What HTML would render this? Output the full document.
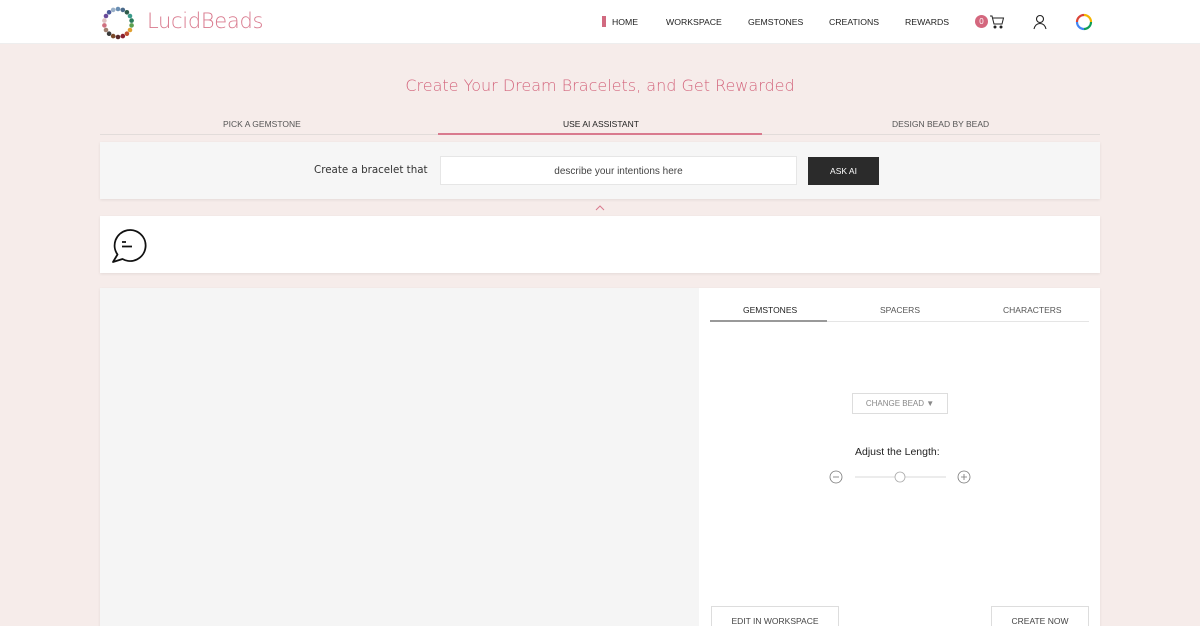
<!DOCTYPE html>
<html><head><meta charset="utf-8"><style>
*{margin:0;padding:0;box-sizing:border-box}
html,body{width:1200px;height:626px;overflow:hidden}
body{background:#f6ecea;font-family:"Liberation Sans",sans-serif;position:relative;color:#222}
.a{position:absolute}
.hdr{left:0;top:0;width:1200px;height:44px;background:#fff;border-bottom:1px solid #eee}
.nav{top:17px;font-size:8.7px;color:#222}
.tab{font-size:8.5px;color:#555;top:119px}
.box{background:#fff;box-shadow:0 1px 3px rgba(0,0,0,.08)}
.btn{border:1px solid #ddd;background:#fff;font-size:8.5px;color:#444;text-align:center}
</style></head><body>
<div class="a hdr"></div>
<svg class="a" style="left:100px;top:5px" width="36" height="36" viewBox="0 0 36 36">
<g>
<circle cx="18" cy="4" r="2.3" fill="#6a8fb3"/><circle cx="22.8" cy="4.9" r="2.3" fill="#4a6a8a"/><circle cx="26.9" cy="7.3" r="2.3" fill="#2e5a4a"/><circle cx="30" cy="11" r="2.3" fill="#3a9a8a"/><circle cx="31.6" cy="15.6" r="2.3" fill="#2a7a5a"/><circle cx="31.6" cy="20.4" r="2.3" fill="#5aa050"/><circle cx="30" cy="25" r="2.3" fill="#e0a030"/><circle cx="26.9" cy="28.7" r="2.3" fill="#c05030"/><circle cx="22.8" cy="31.1" r="2.3" fill="#8a2030"/><circle cx="18" cy="32" r="2.3" fill="#5a2a2a"/><circle cx="13.2" cy="31.1" r="2.3" fill="#7a4a2a"/><circle cx="9.1" cy="28.7" r="2.3" fill="#3a3a3a"/><circle cx="6" cy="25" r="2.3" fill="#a08070"/><circle cx="4.4" cy="20.4" r="2.3" fill="#d07080"/><circle cx="4.4" cy="15.6" r="2.3" fill="#e0c0c0"/><circle cx="6" cy="11" r="2.3" fill="#6a4a9a"/><circle cx="9.1" cy="7.3" r="2.3" fill="#4a5a9a"/><circle cx="13.2" cy="4.9" r="2.3" fill="#9ab0c8"/>
</g></svg>
<div class="a" style="left:147px;top:9px;font-size:21px;color:#d97a8e;font-family:'DejaVu Sans',sans-serif;font-weight:300;letter-spacing:-.3px">LucidBeads</div>
<div class="a" style="left:602px;top:16px;width:4px;height:11px;background:#d16a80"></div>
<div class="a nav" style="left:612px">HOME</div>
<div class="a nav" style="left:666px">WORKSPACE</div>
<div class="a nav" style="left:748px">GEMSTONES</div>
<div class="a nav" style="left:829px">CREATIONS</div>
<div class="a nav" style="left:905px">REWARDS</div>
<div class="a" style="left:975px;top:15px;width:13px;height:13px;border-radius:50%;background:#d4677e;color:#fff;font-size:8px;text-align:center;line-height:13px">0</div>
<svg class="a" style="left:989px;top:14px" width="16" height="16" viewBox="0 0 16 16" fill="none" stroke="#222" stroke-width="1"><path d="M1 2h2l2 8h8l1.5-6H4"/><circle cx="6" cy="13" r="1" fill="#222"/><circle cx="12" cy="13" r="1" fill="#222"/></svg>
<svg class="a" style="left:1032px;top:14px" width="16" height="16" viewBox="0 0 16 16" fill="none" stroke="#222" stroke-width="1.1"><circle cx="8" cy="5" r="3.5"/><path d="M2 15c1-4 3.5-5.5 6-5.5s5 1.5 6 5.5"/></svg>
<svg class="a" style="left:1075px;top:13px" width="18" height="18" viewBox="0 0 18 18" fill="none" stroke-width="2.2"><path d="M9 2a7 7 0 0 1 7 7" stroke="#f4b400"/><path d="M16 9a7 7 0 0 1-7 7" stroke="#0f9d58"/><path d="M9 16a7 7 0 0 1-7-7" stroke="#4285f4"/><path d="M2 9a7 7 0 0 1 7-7" stroke="#db4437"/></svg>

<div class="a" style="left:0;top:76px;width:1200px;text-align:center;font-size:16px;color:#d4677e;font-family:'DejaVu Sans',sans-serif;font-weight:300">Create Your Dream Bracelets, and Get Rewarded</div>
<div class="a" style="left:100px;top:134px;width:1000px;height:1px;background:#e2dcda"></div>
<div class="a" style="left:438px;top:133px;width:324px;height:2px;background:#d97a8e"></div>
<div class="a tab" style="left:223px">PICK A GEMSTONE</div>
<div class="a tab" style="left:563px;color:#222">USE AI ASSISTANT</div>
<div class="a tab" style="left:892px">DESIGN BEAD BY BEAD</div>

<div class="a box" style="left:100px;top:142px;width:1000px;height:57px;background:#f6f6f6"></div>
<div class="a" style="left:314px;top:164px;font-size:10.3px;color:#333;font-family:'DejaVu Sans',sans-serif">Create a bracelet that</div>
<div class="a" style="left:440px;top:156px;width:357px;height:29px;background:#fff;border:1px solid #e6e6e6;font-size:10px;color:#444;text-align:center;line-height:29px">describe your intentions here</div>
<div class="a" style="left:808px;top:157px;width:71px;height:28px;background:#2b2b2b;color:#fff;font-size:8.5px;text-align:center;line-height:28px">ASK AI</div>
<svg class="a" style="left:595px;top:205px" width="10" height="6" viewBox="0 0 10 6" fill="none" stroke="#d97a8e"><path d="M1 5l4-4 4 4"/></svg>

<div class="a box" style="left:100px;top:216px;width:1000px;height:57px"></div>
<svg class="a" style="left:110px;top:227px" width="38" height="38" viewBox="0 0 38 38" fill="none" stroke="#111" stroke-width="1.8" stroke-linejoin="round"><path d="M3 35L7.5 27.5A15.5 15.5 0 1 1 12.5 32Z"/><path d="M12 15h4M12 19.5h10"/></svg>

<div class="a box" style="left:100px;top:288px;width:1000px;height:340px"></div>
<div class="a" style="left:100px;top:288px;width:599px;height:340px;background:#f5f5f5"></div>
<div class="a" style="left:710px;top:321px;width:379px;height:1px;background:#e5e5e5"></div>
<div class="a" style="left:710px;top:320px;width:117px;height:2px;background:#999"></div>
<div class="a tab" style="left:743px;top:305px;color:#222">GEMSTONES</div>
<div class="a tab" style="left:880px;top:305px">SPACERS</div>
<div class="a tab" style="left:1003px;top:305px">CHARACTERS</div>
<div class="a btn" style="left:852px;top:393px;width:96px;height:21px;line-height:20px;color:#888;font-size:8px">CHANGE BEAD &#9660;</div>
<div class="a" style="top:446px;left:855px;font-size:10.5px;color:#222">Adjust the Length:</div>
<svg class="a" style="left:828px;top:469px" width="150" height="16" viewBox="0 0 150 16" fill="none" stroke="#777" stroke-width=".8"><circle cx="8" cy="8" r="6"/><path d="M5 8h6"/><path d="M27 8h91" stroke="#ccc"/><circle cx="72" cy="8" r="5" fill="#fff" stroke="#aaa"/><circle cx="136" cy="8" r="6"/><path d="M133 8h6M136 5v6"/></svg>
<div class="a btn" style="left:711px;top:606px;width:128px;height:30px;line-height:28px">EDIT IN WORKSPACE</div>
<div class="a btn" style="left:991px;top:606px;width:98px;height:30px;line-height:28px">CREATE NOW</div>
</body></html>
